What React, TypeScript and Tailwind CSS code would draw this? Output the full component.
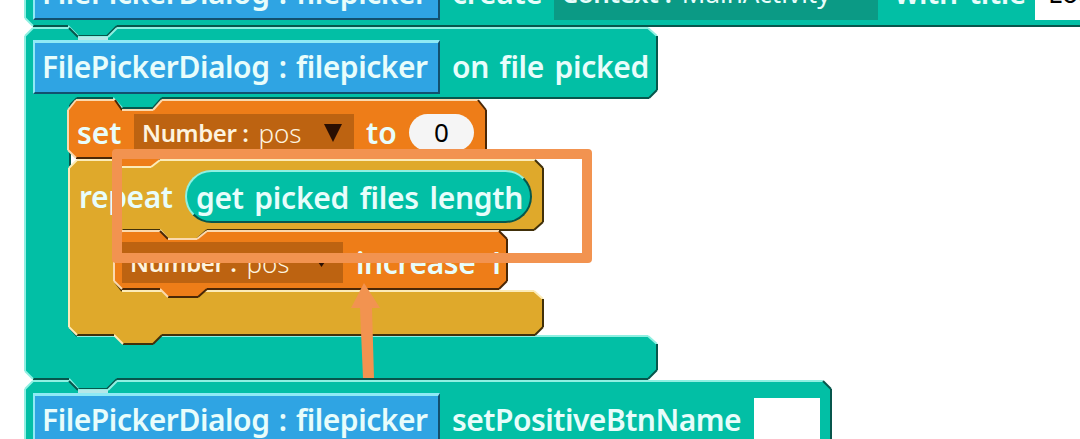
type Pt = [number, number]

const TEAL = { fill: "#02bfa5", light: "#8ff0e2", dark: "#07564c" }
const ORANGE = { fill: "#ee7d18", light: "#fbd9ae", dark: "#4a2706" }
const GOLD = { fill: "#dfa92b", light: "#fcebb8", dark: "#41300a" }

// Bevelled block outline: top and left edges lit, bottom and right edges dark
function Shape({ pts, color, notch }: { pts: Pt[]; color: typeof TEAL; notch?: boolean }) {
  return (
    <svg className="absolute left-0 top-0 overflow-visible" width="1" height="1">
      <polygon points={pts.map((p) => p.join(",")).join(" ")} fill={color.fill} />
      {pts.map((p, i) => {
        const q = pts[(i + 1) % pts.length]
        const dx = q[0] - p[0]
        const dy = q[1] - p[1]
        const sum = dy - dx
        const lit = sum < 0 || (sum === 0 && dx < 0)
        return (
          <line
            key={i}
            x1={p[0]}
            y1={p[1]}
            x2={q[0]}
            y2={q[1]}
            stroke={lit ? color.light : color.dark}
            strokeWidth="2"
          />
        )
      })}
      {notch && <rect x="53" y="9" width="30" height="3" fill="#b5e8e8" />}
    </svg>
  )
}

function Chip() {
  return (
    <div className="flex h-[54px] w-[407px] shrink-0 items-center border-2 border-t-[3px] border-t-[#8feaf5] border-l-[#8feaf5] border-r-[#12506e] border-b-[#12506e] bg-[#2fa4e3] pb-[2px] pl-[7px] text-[30px] leading-none font-semibold tracking-[-0.45px] text-[#e8fdfb] [word-spacing:2px]">
      FilePickerDialog : filepicker
    </div>
  )
}

function Label({ children, className = "" }: { children: React.ReactNode; className?: string }) {
  return (
    <span className={`relative text-[30px] leading-none font-semibold whitespace-pre text-[#e8fdfb] ${className}`}>
      {children}
    </span>
  )
}

const cPoints: Pt[] = [
  [0, 8], [8, 0], [44, 0], [53, 9], [83, 9], [92, 0], [623, 0], [632, 8], [632, 62], [624, 70],
  [137, 70], [128, 80], [97, 80], [88, 70], [52, 70], [45, 77], [45, 300], [52, 308], [623, 308],
  [632, 316], [632, 342], [623, 351], [92, 351], [82, 361], [53, 361], [44, 351], [8, 351], [0, 343],
]
const topPoints: Pt[] = [
  [0, 0], [1100, 0], [1100, 66], [92, 66], [82, 76], [53, 76], [43, 66], [8, 66], [0, 58],
]
const nextPoints: Pt[] = [
  [0, 8], [8, 0], [44, 0], [53, 9], [83, 9], [92, 0], [798, 0], [806, 8], [806, 120], [0, 120],
]
const setPoints: Pt[] = [
  [0, 10], [8, 0], [47, 0], [54, 10], [85, 10], [94, 0], [410, 0], [418, 10], [418, 50], [410, 58],
  [94, 58], [85, 68], [54, 68], [47, 58], [8, 58], [0, 50],
]
const repeatPoints: Pt[] = [
  [0, 8], [8, 0], [46, 0], [53, 7], [82, 7], [91, 0], [466, 0], [474, 8], [474, 62], [465, 70],
  [138, 70], [128, 79], [99, 79], [91, 70], [54, 70], [46, 78], [46, 122], [53, 131], [465, 131],
  [474, 139], [474, 167], [466, 175], [93, 175], [84, 184], [54, 184], [45, 175], [8, 175], [0, 167],
]
const orangePoints: Pt[] = [
  [0, 8], [8, 0], [46, 0], [54, 8], [83, 8], [93, 0], [385, 0], [393, 8], [393, 50], [385, 58],
  [93, 58], [84, 66], [54, 66], [46, 58], [8, 58], [0, 50],
]

export default function App() {
  return (
    <div className="relative h-[439px] w-[1080px] overflow-hidden bg-white font-['Noto_Sans',sans-serif]">
      <div className="flex flex-col pl-[25px]">
        {/* block cut off by the top of the page */}
        <div className="relative -mt-[40px] h-[66px] w-[1055px]">
          <Shape pts={topPoints} color={TEAL} />
          <div className="relative flex pl-[8px] pt-[6px]">
            <Chip />
            <div className="flex h-[54px] items-center">
              <Label className="ml-[12px] tracking-[-0.3px]">create</Label>
              <div className="relative ml-[11px] flex h-[54px] w-[324px] items-center bg-[#0b9a85] pl-[8px] text-[26px] whitespace-pre text-[#e8fdfb]">
                <span className="font-semibold tracking-[-0.4px]">Context : </span>
                <span className="ml-[4px]">MainActivity</span>
              </div>
              <Label className="ml-[17px] tracking-[-0.4px] [word-spacing:4px]">with title</Label>
              <div className="relative ml-[9px] flex h-[54px] w-[60px] items-center overflow-hidden bg-white pl-[13px] text-[27px] whitespace-pre text-black">
                Loa
              </div>
            </div>
          </div>
        </div>

        {/* on file picked */}
        <div className="relative mt-[2px] h-[351px] w-[632px]">
          <Shape pts={cPoints} color={TEAL} notch />
          <div className="relative pl-[8px] pt-[12px]">
            <div className="flex items-center">
              <Chip />
              <Label className="ml-[12px] tracking-[-0.3px] [word-spacing:3px]">on file picked</Label>
            </div>
          </div>

          <div className="relative ml-[43px] mt-[6px] flex flex-col">
            {/* set Number : pos to 0 */}
            <div className="relative h-[58px] w-[418px]">
              <Shape pts={setPoints} color={ORANGE} />
              <div className="relative flex items-center pl-[9px] pt-[14px]">
                <Label className="w-[57px] text-[28px]">set</Label>
                <div className="flex h-[37px] w-[220px] items-center bg-[#bd6311] pl-[8px] text-[26px] leading-none whitespace-pre text-[#fdf3df]">
                  <span className="text-[24px] font-semibold tracking-[-0.4px]">Number : </span>
                  <span className="ml-[4px] font-light">pos</span>
                  <svg className="ml-[23px]" width="18" height="18" viewBox="0 0 18 18">
                    <polygon points="0,0 18,0 9,18" fill="#2a0f02" />
                  </svg>
                </div>
                <Label className="ml-[12px] w-[43px] text-[28px]">to</Label>
                <div className="flex h-[37px] w-[65px] items-center justify-center rounded-full bg-[#f5f5f5] text-[26px] text-black">
                  0
                </div>
              </div>
            </div>

            {/* repeat */}
            <div className="relative ml-[1px] mt-[2px] h-[175px] w-[474px]">
              <Shape pts={repeatPoints} color={GOLD} />
              <div className="relative flex items-center pl-[10px] pt-[10px]">
                <Label className="w-[106px] text-[28px] tracking-[-0.4px]">repeat</Label>
                <div className="flex h-[53px] w-[347px] items-center rounded-full border-2 border-t-[#8ff0e2] border-l-[#8ff0e2] border-r-[#07564c] border-b-[#07564c] bg-[#02bfa5] pl-[9px] pt-[2px] text-[30px] font-semibold tracking-[-0.25px] whitespace-pre text-[#e8fdfb] [word-spacing:3px]">
                  get picked files length
                </div>
              </div>

              <div className="relative ml-[45px] mt-[8px] h-[58px] w-[393px]">
                <Shape pts={orangePoints} color={ORANGE} />
                <div className="relative flex items-center pl-[8px] pt-[11px]">
                  <div className="flex h-[41px] w-[221px] items-center bg-[#bd6311] pl-[8px] text-[26px] leading-none whitespace-pre text-[#fdf3df]">
                    <span className="text-[24px] font-semibold tracking-[-0.4px]">Number : </span>
                    <span className="ml-[4px] font-light">pos</span>
                    <svg className="ml-[27px]" width="11" height="8" viewBox="0 0 11 8">
                      <polygon points="0,0 11,0 5.5,8" fill="#2a0f02" />
                    </svg>
                  </div>
                  <Label className="ml-[13px] text-[28px] tracking-[-0.4px] [word-spacing:4px]">increase 1</Label>
                </div>
              </div>
            </div>
          </div>
        </div>

        {/* setPositiveBtnName */}
        <div className="relative mt-[2px] h-[60px] w-[806px]">
          <Shape pts={nextPoints} color={TEAL} notch />
          <div className="relative flex items-start pl-[8px] pt-[12px]">
            <Chip />
            <Label className="ml-[12px] mt-[12px] w-[302px] tracking-[-0.5px]">setPositiveBtnName</Label>
            <div className="mt-[5px] h-[60px] w-[66px] bg-white" />
          </div>
        </div>
      </div>

      {/* annotation drawn over the blocks */}
      <div className="absolute left-[112px] top-[149px] h-[114px] w-[480px] rounded-[4px] border-[10px] border-[#f29350]" />
      <svg className="absolute left-[345px] top-[280px]" width="40" height="100" viewBox="0 0 40 100">
        <polygon points="19,3 35,28 27,28 29,98 18,98 15,28 6,28" fill="#f29350" />
      </svg>
    </div>
  )
}
